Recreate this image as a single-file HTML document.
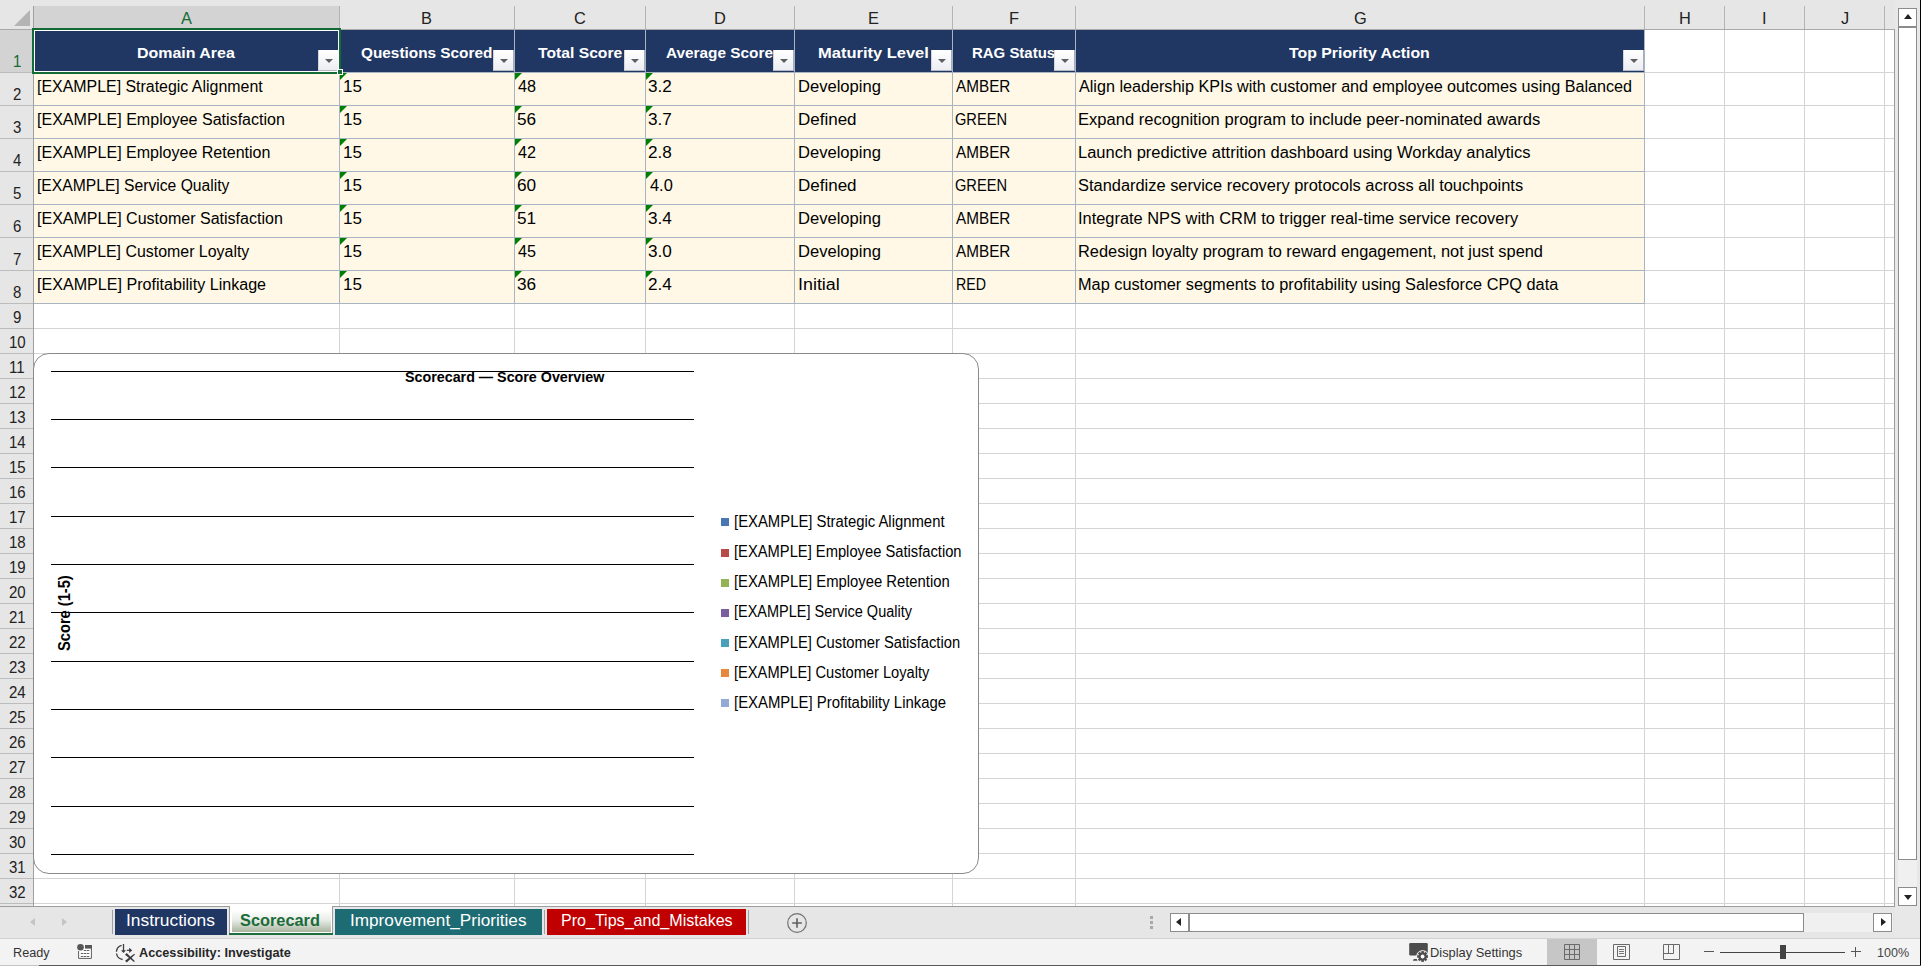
<!DOCTYPE html>
<html><head><meta charset="utf-8"><style>
html,body{margin:0;padding:0;}
body{width:1921px;height:966px;position:relative;overflow:hidden;background:#e6e6e6;font-family:'Liberation Sans',sans-serif;}
body>div,body>svg{position:absolute;}
.t{white-space:nowrap;transform-origin:0 0;}
</style></head><body>
<div style="left:0px;top:0px;width:1921px;height:966px;background:#e6e6e6"></div><div style="left:34px;top:30px;width:1860px;height:876px;background:#fff"></div><div style="left:34px;top:6px;width:305px;height:23px;background:#d3d3d3"></div><div style="left:0px;top:30px;width:33px;height:42px;background:#d3d3d3"></div><div style="left:339px;top:6px;width:1px;height:23px;background:#b4b4b4"></div><div style="left:514px;top:6px;width:1px;height:23px;background:#b4b4b4"></div><div style="left:645px;top:6px;width:1px;height:23px;background:#b4b4b4"></div><div style="left:794px;top:6px;width:1px;height:23px;background:#b4b4b4"></div><div style="left:952px;top:6px;width:1px;height:23px;background:#b4b4b4"></div><div style="left:1075px;top:6px;width:1px;height:23px;background:#b4b4b4"></div><div style="left:1644px;top:6px;width:1px;height:23px;background:#b4b4b4"></div><div style="left:1724px;top:6px;width:1px;height:23px;background:#b4b4b4"></div><div style="left:1804px;top:6px;width:1px;height:23px;background:#b4b4b4"></div><div style="left:1884px;top:6px;width:1px;height:23px;background:#b4b4b4"></div><div style="left:0px;top:29px;width:1895px;height:1px;background:#a9a9a9"></div><div style="left:33px;top:6px;width:1px;height:901px;background:#a0a0a0"></div><div style="left:0px;top:72px;width:33px;height:1px;background:#bcbcbc"></div><div style="left:0px;top:105px;width:33px;height:1px;background:#bcbcbc"></div><div style="left:0px;top:138px;width:33px;height:1px;background:#bcbcbc"></div><div style="left:0px;top:171px;width:33px;height:1px;background:#bcbcbc"></div><div style="left:0px;top:204px;width:33px;height:1px;background:#bcbcbc"></div><div style="left:0px;top:237px;width:33px;height:1px;background:#bcbcbc"></div><div style="left:0px;top:270px;width:33px;height:1px;background:#bcbcbc"></div><div style="left:0px;top:303px;width:33px;height:1px;background:#bcbcbc"></div><div style="left:0px;top:328px;width:33px;height:1px;background:#bcbcbc"></div><div style="left:0px;top:353px;width:33px;height:1px;background:#bcbcbc"></div><div style="left:0px;top:378px;width:33px;height:1px;background:#bcbcbc"></div><div style="left:0px;top:403px;width:33px;height:1px;background:#bcbcbc"></div><div style="left:0px;top:428px;width:33px;height:1px;background:#bcbcbc"></div><div style="left:0px;top:453px;width:33px;height:1px;background:#bcbcbc"></div><div style="left:0px;top:478px;width:33px;height:1px;background:#bcbcbc"></div><div style="left:0px;top:503px;width:33px;height:1px;background:#bcbcbc"></div><div style="left:0px;top:528px;width:33px;height:1px;background:#bcbcbc"></div><div style="left:0px;top:553px;width:33px;height:1px;background:#bcbcbc"></div><div style="left:0px;top:578px;width:33px;height:1px;background:#bcbcbc"></div><div style="left:0px;top:603px;width:33px;height:1px;background:#bcbcbc"></div><div style="left:0px;top:628px;width:33px;height:1px;background:#bcbcbc"></div><div style="left:0px;top:653px;width:33px;height:1px;background:#bcbcbc"></div><div style="left:0px;top:678px;width:33px;height:1px;background:#bcbcbc"></div><div style="left:0px;top:703px;width:33px;height:1px;background:#bcbcbc"></div><div style="left:0px;top:728px;width:33px;height:1px;background:#bcbcbc"></div><div style="left:0px;top:753px;width:33px;height:1px;background:#bcbcbc"></div><div style="left:0px;top:778px;width:33px;height:1px;background:#bcbcbc"></div><div style="left:0px;top:803px;width:33px;height:1px;background:#bcbcbc"></div><div style="left:0px;top:828px;width:33px;height:1px;background:#bcbcbc"></div><div style="left:0px;top:853px;width:33px;height:1px;background:#bcbcbc"></div><div style="left:0px;top:878px;width:33px;height:1px;background:#bcbcbc"></div><div style="left:0px;top:903px;width:33px;height:1px;background:#bcbcbc"></div><div style="left:34px;top:72px;width:1860px;height:1px;background:#d4d4d4"></div><div style="left:34px;top:105px;width:1860px;height:1px;background:#d4d4d4"></div><div style="left:34px;top:138px;width:1860px;height:1px;background:#d4d4d4"></div><div style="left:34px;top:171px;width:1860px;height:1px;background:#d4d4d4"></div><div style="left:34px;top:204px;width:1860px;height:1px;background:#d4d4d4"></div><div style="left:34px;top:237px;width:1860px;height:1px;background:#d4d4d4"></div><div style="left:34px;top:270px;width:1860px;height:1px;background:#d4d4d4"></div><div style="left:34px;top:303px;width:1860px;height:1px;background:#d4d4d4"></div><div style="left:34px;top:328px;width:1860px;height:1px;background:#d4d4d4"></div><div style="left:34px;top:353px;width:1860px;height:1px;background:#d4d4d4"></div><div style="left:34px;top:378px;width:1860px;height:1px;background:#d4d4d4"></div><div style="left:34px;top:403px;width:1860px;height:1px;background:#d4d4d4"></div><div style="left:34px;top:428px;width:1860px;height:1px;background:#d4d4d4"></div><div style="left:34px;top:453px;width:1860px;height:1px;background:#d4d4d4"></div><div style="left:34px;top:478px;width:1860px;height:1px;background:#d4d4d4"></div><div style="left:34px;top:503px;width:1860px;height:1px;background:#d4d4d4"></div><div style="left:34px;top:528px;width:1860px;height:1px;background:#d4d4d4"></div><div style="left:34px;top:553px;width:1860px;height:1px;background:#d4d4d4"></div><div style="left:34px;top:578px;width:1860px;height:1px;background:#d4d4d4"></div><div style="left:34px;top:603px;width:1860px;height:1px;background:#d4d4d4"></div><div style="left:34px;top:628px;width:1860px;height:1px;background:#d4d4d4"></div><div style="left:34px;top:653px;width:1860px;height:1px;background:#d4d4d4"></div><div style="left:34px;top:678px;width:1860px;height:1px;background:#d4d4d4"></div><div style="left:34px;top:703px;width:1860px;height:1px;background:#d4d4d4"></div><div style="left:34px;top:728px;width:1860px;height:1px;background:#d4d4d4"></div><div style="left:34px;top:753px;width:1860px;height:1px;background:#d4d4d4"></div><div style="left:34px;top:778px;width:1860px;height:1px;background:#d4d4d4"></div><div style="left:34px;top:803px;width:1860px;height:1px;background:#d4d4d4"></div><div style="left:34px;top:828px;width:1860px;height:1px;background:#d4d4d4"></div><div style="left:34px;top:853px;width:1860px;height:1px;background:#d4d4d4"></div><div style="left:34px;top:878px;width:1860px;height:1px;background:#d4d4d4"></div><div style="left:34px;top:903px;width:1860px;height:1px;background:#d4d4d4"></div><div style="left:339px;top:30px;width:1px;height:876px;background:#d4d4d4"></div><div style="left:514px;top:30px;width:1px;height:876px;background:#d4d4d4"></div><div style="left:645px;top:30px;width:1px;height:876px;background:#d4d4d4"></div><div style="left:794px;top:30px;width:1px;height:876px;background:#d4d4d4"></div><div style="left:952px;top:30px;width:1px;height:876px;background:#d4d4d4"></div><div style="left:1075px;top:30px;width:1px;height:876px;background:#d4d4d4"></div><div style="left:1644px;top:30px;width:1px;height:876px;background:#d4d4d4"></div><div style="left:1724px;top:30px;width:1px;height:876px;background:#d4d4d4"></div><div style="left:1804px;top:30px;width:1px;height:876px;background:#d4d4d4"></div><div style="left:1884px;top:30px;width:1px;height:876px;background:#d4d4d4"></div><div style="left:1894px;top:29px;width:1px;height:878px;background:#9c9c9c"></div><div style="left:0px;top:906px;width:1895px;height:1px;background:#9c9c9c"></div><div style="left:34px;top:30px;width:1610px;height:42px;background:#203764"></div><div style="left:34px;top:73px;width:1610px;height:230px;background:#fff8e6"></div><div style="left:34px;top:105px;width:1611px;height:1px;background:#aab3c1"></div><div style="left:34px;top:138px;width:1611px;height:1px;background:#aab3c1"></div><div style="left:34px;top:171px;width:1611px;height:1px;background:#aab3c1"></div><div style="left:34px;top:204px;width:1611px;height:1px;background:#aab3c1"></div><div style="left:34px;top:237px;width:1611px;height:1px;background:#aab3c1"></div><div style="left:34px;top:270px;width:1611px;height:1px;background:#aab3c1"></div><div style="left:34px;top:303px;width:1611px;height:1px;background:#aab3c1"></div><div style="left:34px;top:72px;width:1611px;height:1px;background:#aab3c1"></div><div style="left:339px;top:30px;width:1px;height:274px;background:#aab3c1"></div><div style="left:514px;top:30px;width:1px;height:274px;background:#aab3c1"></div><div style="left:645px;top:30px;width:1px;height:274px;background:#aab3c1"></div><div style="left:794px;top:30px;width:1px;height:274px;background:#aab3c1"></div><div style="left:952px;top:30px;width:1px;height:274px;background:#aab3c1"></div><div style="left:1075px;top:30px;width:1px;height:274px;background:#aab3c1"></div><div style="left:1644px;top:30px;width:1px;height:274px;background:#aab3c1"></div><div style="left:318px;top:50px;width:21px;height:21px;background:linear-gradient(#ffffff,#eceef3);border-left:1px solid #d2d5da;border-bottom:1px solid #b4b8c0;border-right:1px solid #a6adb8;box-sizing:border-box"></div><div style="left:324.5px;top:59px;width:0;height:0;border-left:4px solid transparent;border-right:4px solid transparent;border-top:4px solid #5f5f5f"></div><div style="left:493px;top:50px;width:21px;height:21px;background:linear-gradient(#ffffff,#eceef3);border-left:1px solid #d2d5da;border-bottom:1px solid #b4b8c0;border-right:1px solid #a6adb8;box-sizing:border-box"></div><div style="left:499.5px;top:59px;width:0;height:0;border-left:4px solid transparent;border-right:4px solid transparent;border-top:4px solid #5f5f5f"></div><div style="left:624px;top:50px;width:21px;height:21px;background:linear-gradient(#ffffff,#eceef3);border-left:1px solid #d2d5da;border-bottom:1px solid #b4b8c0;border-right:1px solid #a6adb8;box-sizing:border-box"></div><div style="left:630.5px;top:59px;width:0;height:0;border-left:4px solid transparent;border-right:4px solid transparent;border-top:4px solid #5f5f5f"></div><div style="left:773px;top:50px;width:21px;height:21px;background:linear-gradient(#ffffff,#eceef3);border-left:1px solid #d2d5da;border-bottom:1px solid #b4b8c0;border-right:1px solid #a6adb8;box-sizing:border-box"></div><div style="left:779.5px;top:59px;width:0;height:0;border-left:4px solid transparent;border-right:4px solid transparent;border-top:4px solid #5f5f5f"></div><div style="left:931px;top:50px;width:21px;height:21px;background:linear-gradient(#ffffff,#eceef3);border-left:1px solid #d2d5da;border-bottom:1px solid #b4b8c0;border-right:1px solid #a6adb8;box-sizing:border-box"></div><div style="left:937.5px;top:59px;width:0;height:0;border-left:4px solid transparent;border-right:4px solid transparent;border-top:4px solid #5f5f5f"></div><div style="left:1054px;top:50px;width:21px;height:21px;background:linear-gradient(#ffffff,#eceef3);border-left:1px solid #d2d5da;border-bottom:1px solid #b4b8c0;border-right:1px solid #a6adb8;box-sizing:border-box"></div><div style="left:1060.5px;top:59px;width:0;height:0;border-left:4px solid transparent;border-right:4px solid transparent;border-top:4px solid #5f5f5f"></div><div style="left:1623px;top:50px;width:21px;height:21px;background:linear-gradient(#ffffff,#eceef3);border-left:1px solid #d2d5da;border-bottom:1px solid #b4b8c0;border-right:1px solid #a6adb8;box-sizing:border-box"></div><div style="left:1629.5px;top:59px;width:0;height:0;border-left:4px solid transparent;border-right:4px solid transparent;border-top:4px solid #5f5f5f"></div><div style="left:340px;top:73px;width:0;height:0;border-top:7px solid #008000;border-right:7px solid transparent"></div><div style="left:515px;top:73px;width:0;height:0;border-top:7px solid #008000;border-right:7px solid transparent"></div><div style="left:646px;top:73px;width:0;height:0;border-top:7px solid #008000;border-right:7px solid transparent"></div><div style="left:340px;top:106px;width:0;height:0;border-top:7px solid #008000;border-right:7px solid transparent"></div><div style="left:515px;top:106px;width:0;height:0;border-top:7px solid #008000;border-right:7px solid transparent"></div><div style="left:646px;top:106px;width:0;height:0;border-top:7px solid #008000;border-right:7px solid transparent"></div><div style="left:340px;top:139px;width:0;height:0;border-top:7px solid #008000;border-right:7px solid transparent"></div><div style="left:515px;top:139px;width:0;height:0;border-top:7px solid #008000;border-right:7px solid transparent"></div><div style="left:646px;top:139px;width:0;height:0;border-top:7px solid #008000;border-right:7px solid transparent"></div><div style="left:340px;top:172px;width:0;height:0;border-top:7px solid #008000;border-right:7px solid transparent"></div><div style="left:515px;top:172px;width:0;height:0;border-top:7px solid #008000;border-right:7px solid transparent"></div><div style="left:646px;top:172px;width:0;height:0;border-top:7px solid #008000;border-right:7px solid transparent"></div><div style="left:340px;top:205px;width:0;height:0;border-top:7px solid #008000;border-right:7px solid transparent"></div><div style="left:515px;top:205px;width:0;height:0;border-top:7px solid #008000;border-right:7px solid transparent"></div><div style="left:646px;top:205px;width:0;height:0;border-top:7px solid #008000;border-right:7px solid transparent"></div><div style="left:340px;top:238px;width:0;height:0;border-top:7px solid #008000;border-right:7px solid transparent"></div><div style="left:515px;top:238px;width:0;height:0;border-top:7px solid #008000;border-right:7px solid transparent"></div><div style="left:646px;top:238px;width:0;height:0;border-top:7px solid #008000;border-right:7px solid transparent"></div><div style="left:340px;top:271px;width:0;height:0;border-top:7px solid #008000;border-right:7px solid transparent"></div><div style="left:515px;top:271px;width:0;height:0;border-top:7px solid #008000;border-right:7px solid transparent"></div><div style="left:646px;top:271px;width:0;height:0;border-top:7px solid #008000;border-right:7px solid transparent"></div><div style="left:32px;top:28px;width:309px;height:46px;border:2px solid #136b36;box-sizing:border-box"></div><div style="left:34px;top:30px;width:305px;height:42px;border:1px solid #fff;box-sizing:border-box"></div><div style="left:337px;top:69px;width:6px;height:6px;background:#136b36;border:1px solid #fff;box-sizing:border-box"></div><div style="left:34px;top:28px;width:305px;height:1px;background:#136b36"></div><div style="left:14px;top:10px;width:0;height:0;border-bottom:16px solid #b4b4b4;border-left:16px solid transparent"></div><div style="left:33px;top:353px;width:946px;height:521px;background:#fff;border:1px solid #8a8a8a;border-radius:16px;box-sizing:border-box"></div><div style="left:51px;top:371px;width:643px;height:1px;background:#000"></div><div style="left:51px;top:419px;width:643px;height:1px;background:#000"></div><div style="left:51px;top:467px;width:643px;height:1px;background:#000"></div><div style="left:51px;top:516px;width:643px;height:1px;background:#000"></div><div style="left:51px;top:564px;width:643px;height:1px;background:#000"></div><div style="left:51px;top:612px;width:643px;height:1px;background:#000"></div><div style="left:51px;top:661px;width:643px;height:1px;background:#000"></div><div style="left:51px;top:709px;width:643px;height:1px;background:#000"></div><div style="left:51px;top:757px;width:643px;height:1px;background:#000"></div><div style="left:51px;top:806px;width:643px;height:1px;background:#000"></div><div style="left:51px;top:854px;width:643px;height:1px;background:#000"></div><div style="left:721px;top:518px;width:8px;height:8px;background:#4a76b2"></div><div style="left:721px;top:549px;width:8px;height:8px;background:#b84a45"></div><div style="left:721px;top:579px;width:8px;height:8px;background:#93b356"></div><div style="left:721px;top:609px;width:8px;height:8px;background:#7b5e9e"></div><div style="left:721px;top:639px;width:8px;height:8px;background:#4aa0b8"></div><div style="left:721px;top:669px;width:8px;height:8px;background:#e8883f"></div><div style="left:721px;top:699px;width:8px;height:8px;background:#93aad4"></div><div style="left:112px;top:910px;width:1px;height:24px;background:#a0a0a0"></div><div style="left:115px;top:909px;width:112px;height:26px;background:#203764"></div><div style="left:229px;top:906px;width:104px;height:29px;background:#fff;border-left:1px solid #9c9c9c;border-right:1px solid #9c9c9c;box-sizing:border-box"></div><div style="left:232px;top:910px;width:99px;height:22px;background:linear-gradient(#ffffff 0%,#e9ede7 45%,#a9b59f 100%)"></div><div style="left:229px;top:933px;width:104px;height:2px;background:#1c6e3c"></div><div style="left:335px;top:909px;width:207px;height:26px;background:#1d6b73"></div><div style="left:544px;top:910px;width:1px;height:24px;background:#a0a0a0"></div><div style="left:547px;top:909px;width:199px;height:26px;background:#c00000"></div><div style="left:748px;top:910px;width:1px;height:24px;background:#a0a0a0"></div><div style="left:30px;top:918px;width:0;height:0;border-top:4.5px solid transparent;border-bottom:4.5px solid transparent;border-right:5px solid #c4c4c4"></div><div style="left:62px;top:918px;width:0;height:0;border-top:4.5px solid transparent;border-bottom:4.5px solid transparent;border-left:5px solid #c4c4c4"></div><svg style="left:786px;top:912px" width="22" height="22" viewBox="0 0 22 22"><circle cx="11" cy="11" r="9.3" fill="none" stroke="#707070" stroke-width="1.2"/><path d="M11 6.2V15.8M6.2 11H15.8" stroke="#606060" stroke-width="1.6"/></svg><div style="left:1150px;top:916px;width:3px;height:3px;background:#a8a8a8"></div><div style="left:1150px;top:921px;width:3px;height:3px;background:#a8a8a8"></div><div style="left:1150px;top:926px;width:3px;height:3px;background:#a8a8a8"></div><div style="left:1170px;top:913px;width:723px;height:19px;background:#f0f0f0"></div><div style="left:1170px;top:913px;width:19px;height:19px;background:#fff;border:1px solid #8c8c8c;box-sizing:border-box"></div><div style="left:1188px;top:913px;width:616px;height:19px;background:#fff;border:1px solid #8c8c8c;border-left-width:2px;box-sizing:border-box"></div><div style="left:1873px;top:913px;width:19px;height:19px;background:#fff;border:1px solid #8c8c8c;box-sizing:border-box"></div><div style="left:1176px;top:918px;width:0;height:0;border-top:4.5px solid transparent;border-bottom:4.5px solid transparent;border-right:5px solid #222"></div><div style="left:1881px;top:918px;width:0;height:0;border-top:4.5px solid transparent;border-bottom:4.5px solid transparent;border-left:5px solid #222"></div><div style="left:1895px;top:0px;width:25px;height:938px;background:#e8e8e8"></div><div style="left:1898px;top:8px;width:19px;height:880px;background:#f0f0f0"></div><div style="left:1898px;top:8px;width:19px;height:19px;background:#fff;border:1px solid #8c8c8c;box-sizing:border-box"></div><div style="left:1898px;top:26px;width:19px;height:834px;background:#fff;border:1px solid #8c8c8c;border-top-width:2px;box-sizing:border-box"></div><div style="left:1898px;top:887px;width:19px;height:19px;background:#fff;border:1px solid #8c8c8c;box-sizing:border-box"></div><div style="left:1903.5px;top:14px;width:0;height:0;border-left:4.5px solid transparent;border-right:4.5px solid transparent;border-bottom:5px solid #222"></div><div style="left:1903.5px;top:895px;width:0;height:0;border-left:4.5px solid transparent;border-right:4.5px solid transparent;border-top:5px solid #222"></div><div style="left:1920px;top:0px;width:1px;height:966px;background:#000"></div><div style="left:0px;top:938px;width:1920px;height:27px;background:#f3f3f3"></div><div style="left:0px;top:938px;width:1920px;height:1px;background:#d2d2d2"></div><div style="left:0px;top:965px;width:39px;height:1px;background:#c4c4c4"></div><div style="left:39px;top:965px;width:1882px;height:1px;background:#5a5a5a"></div><div style="left:1547px;top:939px;width:50px;height:26px;background:#c6c6c6"></div><svg style="left:74px;top:940px" width="22" height="22" viewBox="0 0 22 22"><path d="M4.6 11V18.4H17.4V5" fill="#fff" stroke="#555" stroke-width="0.95"/><rect x="11" y="5" width="6.9" height="3.6" fill="#555"/><circle cx="6.5" cy="7.3" r="4" fill="#f3f3f3"/><circle cx="6.5" cy="7.3" r="3.3" fill="#555"/><path d="M10.2 10.5h1.7M13.2 10.5h1.7M7.2 13.5h1.7M10.2 13.5h1.7M13.2 13.5h1.7M7.2 16.5h1.7M10.2 16.5h1.7M13.2 16.5h1.7" stroke="#555" stroke-width="0.9" stroke-linecap="round"/></svg><svg style="left:112px;top:940px" width="26" height="24" viewBox="0 0 26 24"><path d="M9.6 5.3A7.2 7.2 0 0 0 4.4 11.7M4.5 13.5A7.2 7.2 0 0 0 10.6 19.5" fill="none" stroke="#3c3c3c" stroke-width="1.35"/><path d="M11.5 4V11" stroke="#3c3c3c" stroke-width="1.3"/><path d="M9 10.2H14L11.5 12.9Z" fill="#3c3c3c"/><path d="M14.8 10.3H18" stroke="#3c3c3c" stroke-width="1.2"/><path d="M17.2 7.7V12.9L20.2 10.3Z" fill="#3c3c3c"/><path d="M13 14.8L14.8 13L22.9 21.2L22 22.1Z" fill="#3c3c3c"/><path d="M13.1 20.8L14.8 22.4L23 14.6L22.2 13.8Z" fill="#3c3c3c"/></svg><svg style="left:1405px;top:940px" width="26" height="24" viewBox="0 0 26 24"><rect x="4.2" y="3" width="18.6" height="12.6" rx="1.3" fill="#4d4d4d"/><path d="M8.8 19H12.7V20.8H7.8Z" fill="#4d4d4d"/><g transform="translate(17.6,16.5)"><g fill="#f3f3f3"><circle r="4.9"/><rect x="-2.1" y="-6.2" width="4.2" height="4" transform="rotate(0)"/><rect x="-2.1" y="-6.2" width="4.2" height="4" transform="rotate(45)"/><rect x="-2.1" y="-6.2" width="4.2" height="4" transform="rotate(90)"/><rect x="-2.1" y="-6.2" width="4.2" height="4" transform="rotate(135)"/><rect x="-2.1" y="-6.2" width="4.2" height="4" transform="rotate(180)"/><rect x="-2.1" y="-6.2" width="4.2" height="4" transform="rotate(225)"/><rect x="-2.1" y="-6.2" width="4.2" height="4" transform="rotate(270)"/><rect x="-2.1" y="-6.2" width="4.2" height="4" transform="rotate(315)"/></g><g fill="#4d4d4d"><circle r="3.9"/><rect x="-1.3" y="-5.4" width="2.6" height="3" transform="rotate(0)"/><rect x="-1.3" y="-5.4" width="2.6" height="3" transform="rotate(45)"/><rect x="-1.3" y="-5.4" width="2.6" height="3" transform="rotate(90)"/><rect x="-1.3" y="-5.4" width="2.6" height="3" transform="rotate(135)"/><rect x="-1.3" y="-5.4" width="2.6" height="3" transform="rotate(180)"/><rect x="-1.3" y="-5.4" width="2.6" height="3" transform="rotate(225)"/><rect x="-1.3" y="-5.4" width="2.6" height="3" transform="rotate(270)"/><rect x="-1.3" y="-5.4" width="2.6" height="3" transform="rotate(315)"/></g><circle r="1.9" fill="#fff"/></g></svg><svg style="left:1564px;top:944px" width="17" height="17" viewBox="0 0 17 17"><path d="M0.5 0.5h15v15h-15zM5.5 0.5v15M10.5 0.5v15M0.5 5.5h15M0.5 10.5h15" fill="none" stroke="#6a6a6a" stroke-width="1"/></svg><svg style="left:1613px;top:944px" width="18" height="17" viewBox="0 0 18 17"><path d="M0.5 0.5h16v15h-16zM4.5 2.5h8v10h-8z" fill="none" stroke="#6a6a6a" stroke-width="1"/><path d="M6 5.5h5M6 7.5h5M6 9.5h5" stroke="#6a6a6a" stroke-width="0.9"/></svg><svg style="left:1663px;top:944px" width="18" height="17" viewBox="0 0 18 17"><path d="M0.5 0.5h16v15h-16zM0.5 9.5h10V0.5M5.5 0.5v9" fill="none" stroke="#6a6a6a" stroke-width="1"/></svg><div style="left:1704px;top:951px;width:10px;height:1px;background:#555"></div><div style="left:1720px;top:952px;width:125px;height:1px;background:#444"></div><div style="left:1780px;top:945px;width:6px;height:14px;background:#444"></div><div style="left:1851px;top:951px;width:10px;height:1px;background:#555"></div><div style="left:1855px;top:947px;width:1px;height:10px;background:#555"></div>
<div class="t" style="left:180.87px;top:11.00px;font-size:16px;line-height:16px;font-weight:400;color:#136b36;transform:scaleX(1.0238)">A</div><div class="t" style="left:421.37px;top:11.00px;font-size:16px;line-height:16px;font-weight:400;color:#222;transform:scaleX(1.0238)">B</div><div class="t" style="left:573.86px;top:11.00px;font-size:16px;line-height:16px;font-weight:400;color:#222;transform:scaleX(1.0238)">C</div><div class="t" style="left:713.86px;top:11.00px;font-size:16px;line-height:16px;font-weight:400;color:#222;transform:scaleX(1.0238)">D</div><div class="t" style="left:867.87px;top:11.00px;font-size:16px;line-height:16px;font-weight:400;color:#222;transform:scaleX(1.0238)">E</div><div class="t" style="left:1008.88px;top:11.00px;font-size:16px;line-height:16px;font-weight:400;color:#222;transform:scaleX(1.0238)">F</div><div class="t" style="left:1353.86px;top:11.00px;font-size:16px;line-height:16px;font-weight:400;color:#222;transform:scaleX(1.0238)">G</div><div class="t" style="left:1678.87px;top:11.00px;font-size:16px;line-height:16px;font-weight:400;color:#222;transform:scaleX(1.0238)">H</div><div class="t" style="left:1762.45px;top:11.00px;font-size:16px;line-height:16px;font-weight:400;color:#222;transform:scaleX(1.0238)">I</div><div class="t" style="left:1840.92px;top:11.00px;font-size:16px;line-height:16px;font-weight:400;color:#222;transform:scaleX(1.0238)">J</div><div class="t" style="left:12.85px;top:53.00px;font-size:16.5px;line-height:16.5px;font-weight:400;color:#136b36;transform:scaleX(0.9100)">1</div><div class="t" style="left:12.85px;top:86.00px;font-size:16.5px;line-height:16.5px;font-weight:400;color:#222;transform:scaleX(0.9100)">2</div><div class="t" style="left:12.85px;top:119.00px;font-size:16.5px;line-height:16.5px;font-weight:400;color:#222;transform:scaleX(0.9100)">3</div><div class="t" style="left:13.30px;top:152.00px;font-size:16.5px;line-height:16.5px;font-weight:400;color:#222;transform:scaleX(0.9100)">4</div><div class="t" style="left:12.85px;top:185.00px;font-size:16.5px;line-height:16.5px;font-weight:400;color:#222;transform:scaleX(0.9100)">5</div><div class="t" style="left:12.85px;top:218.00px;font-size:16.5px;line-height:16.5px;font-weight:400;color:#222;transform:scaleX(0.9100)">6</div><div class="t" style="left:12.85px;top:251.00px;font-size:16.5px;line-height:16.5px;font-weight:400;color:#222;transform:scaleX(0.9100)">7</div><div class="t" style="left:12.85px;top:284.00px;font-size:16.5px;line-height:16.5px;font-weight:400;color:#222;transform:scaleX(0.9100)">8</div><div class="t" style="left:12.85px;top:309.00px;font-size:16.5px;line-height:16.5px;font-weight:400;color:#222;transform:scaleX(0.9100)">9</div><div class="t" style="left:8.75px;top:334.00px;font-size:16.5px;line-height:16.5px;font-weight:400;color:#222;transform:scaleX(0.9100)">10</div><div class="t" style="left:9.21px;top:359.00px;font-size:16.5px;line-height:16.5px;font-weight:400;color:#222;transform:scaleX(0.9100)">11</div><div class="t" style="left:8.75px;top:384.00px;font-size:16.5px;line-height:16.5px;font-weight:400;color:#222;transform:scaleX(0.9100)">12</div><div class="t" style="left:8.75px;top:409.00px;font-size:16.5px;line-height:16.5px;font-weight:400;color:#222;transform:scaleX(0.9100)">13</div><div class="t" style="left:8.75px;top:434.00px;font-size:16.5px;line-height:16.5px;font-weight:400;color:#222;transform:scaleX(0.9100)">14</div><div class="t" style="left:8.75px;top:459.00px;font-size:16.5px;line-height:16.5px;font-weight:400;color:#222;transform:scaleX(0.9100)">15</div><div class="t" style="left:8.75px;top:484.00px;font-size:16.5px;line-height:16.5px;font-weight:400;color:#222;transform:scaleX(0.9100)">16</div><div class="t" style="left:8.75px;top:509.00px;font-size:16.5px;line-height:16.5px;font-weight:400;color:#222;transform:scaleX(0.9100)">17</div><div class="t" style="left:8.75px;top:534.00px;font-size:16.5px;line-height:16.5px;font-weight:400;color:#222;transform:scaleX(0.9100)">18</div><div class="t" style="left:8.75px;top:559.00px;font-size:16.5px;line-height:16.5px;font-weight:400;color:#222;transform:scaleX(0.9100)">19</div><div class="t" style="left:8.75px;top:584.00px;font-size:16.5px;line-height:16.5px;font-weight:400;color:#222;transform:scaleX(0.9100)">20</div><div class="t" style="left:8.75px;top:609.00px;font-size:16.5px;line-height:16.5px;font-weight:400;color:#222;transform:scaleX(0.9100)">21</div><div class="t" style="left:8.75px;top:634.00px;font-size:16.5px;line-height:16.5px;font-weight:400;color:#222;transform:scaleX(0.9100)">22</div><div class="t" style="left:8.75px;top:659.00px;font-size:16.5px;line-height:16.5px;font-weight:400;color:#222;transform:scaleX(0.9100)">23</div><div class="t" style="left:8.75px;top:684.00px;font-size:16.5px;line-height:16.5px;font-weight:400;color:#222;transform:scaleX(0.9100)">24</div><div class="t" style="left:8.75px;top:709.00px;font-size:16.5px;line-height:16.5px;font-weight:400;color:#222;transform:scaleX(0.9100)">25</div><div class="t" style="left:8.75px;top:734.00px;font-size:16.5px;line-height:16.5px;font-weight:400;color:#222;transform:scaleX(0.9100)">26</div><div class="t" style="left:8.75px;top:759.00px;font-size:16.5px;line-height:16.5px;font-weight:400;color:#222;transform:scaleX(0.9100)">27</div><div class="t" style="left:8.75px;top:784.00px;font-size:16.5px;line-height:16.5px;font-weight:400;color:#222;transform:scaleX(0.9100)">28</div><div class="t" style="left:8.75px;top:809.00px;font-size:16.5px;line-height:16.5px;font-weight:400;color:#222;transform:scaleX(0.9100)">29</div><div class="t" style="left:8.75px;top:834.00px;font-size:16.5px;line-height:16.5px;font-weight:400;color:#222;transform:scaleX(0.9100)">30</div><div class="t" style="left:8.75px;top:859.00px;font-size:16.5px;line-height:16.5px;font-weight:400;color:#222;transform:scaleX(0.9100)">31</div><div class="t" style="left:8.75px;top:884.00px;font-size:16.5px;line-height:16.5px;font-weight:400;color:#222;transform:scaleX(0.9100)">32</div><div class="t" style="left:136.57px;top:45.00px;font-size:15.5px;line-height:15.5px;font-weight:700;color:#fff;transform:scaleX(1.0287)">Domain Area</div><div class="t" style="left:360.51px;top:45.00px;font-size:15.5px;line-height:15.5px;font-weight:700;color:#fff;transform:scaleX(0.9901)">Questions Scored</div><div class="t" style="left:538.00px;top:45.00px;font-size:15.5px;line-height:15.5px;font-weight:700;color:#fff;transform:scaleX(1.0120)">Total Score</div><div class="t" style="left:666.00px;top:45.00px;font-size:15.5px;line-height:15.5px;font-weight:700;color:#fff;transform:scaleX(0.9907)">Average Score</div><div class="t" style="left:818.44px;top:45.00px;font-size:15.5px;line-height:15.5px;font-weight:700;color:#fff;transform:scaleX(1.0637)">Maturity Level</div><div class="t" style="left:971.54px;top:45.00px;font-size:15.5px;line-height:15.5px;font-weight:700;color:#fff;transform:scaleX(0.9647)">RAG Status</div><div class="t" style="left:1289.20px;top:45.00px;font-size:15.5px;line-height:15.5px;font-weight:700;color:#fff;transform:scaleX(1.0219)">Top Priority Action</div><div class="t" style="left:37.10px;top:79.00px;font-size:16px;line-height:16px;font-weight:400;color:#000;transform:scaleX(0.9951)">[EXAMPLE] Strategic Alignment</div><div class="t" style="left:342.94px;top:79.00px;font-size:16px;line-height:16px;font-weight:400;color:#000;transform:scaleX(1.0625)">15</div><div class="t" style="left:518.40px;top:79.00px;font-size:16px;line-height:16px;font-weight:400;color:#000;transform:scaleX(1.0118)">48</div><div class="t" style="left:648.43px;top:79.00px;font-size:16px;line-height:16px;font-weight:400;color:#000;transform:scaleX(1.0714)">3.2</div><div class="t" style="left:797.71px;top:79.00px;font-size:16px;line-height:16px;font-weight:400;color:#000;transform:scaleX(1.0353)">Developing</div><div class="t" style="left:956.00px;top:79.00px;font-size:16px;line-height:16px;font-weight:400;color:#000;transform:scaleX(0.9554)">AMBER</div><div class="t" style="left:1079.00px;top:79.00px;font-size:16px;line-height:16px;font-weight:400;color:#000;transform:scaleX(1.0095)">Align leadership KPIs with customer and employee outcomes using Balanced</div><div class="t" style="left:37.10px;top:112.00px;font-size:16px;line-height:16px;font-weight:400;color:#000;transform:scaleX(1.0027)">[EXAMPLE] Employee Satisfaction</div><div class="t" style="left:342.94px;top:112.00px;font-size:16px;line-height:16px;font-weight:400;color:#000;transform:scaleX(1.0625)">15</div><div class="t" style="left:517.32px;top:112.00px;font-size:16px;line-height:16px;font-weight:400;color:#000;transform:scaleX(1.0750)">56</div><div class="t" style="left:648.43px;top:112.00px;font-size:16px;line-height:16px;font-weight:400;color:#000;transform:scaleX(1.0714)">3.7</div><div class="t" style="left:797.69px;top:112.00px;font-size:16px;line-height:16px;font-weight:400;color:#000;transform:scaleX(1.0613)">Defined</div><div class="t" style="left:955.09px;top:112.00px;font-size:16px;line-height:16px;font-weight:400;color:#000;transform:scaleX(0.9136)">GREEN</div><div class="t" style="left:1077.96px;top:112.00px;font-size:16px;line-height:16px;font-weight:400;color:#000;transform:scaleX(1.0353)">Expand recognition program to include peer-nominated awards</div><div class="t" style="left:37.10px;top:145.00px;font-size:16px;line-height:16px;font-weight:400;color:#000;transform:scaleX(1.0017)">[EXAMPLE] Employee Retention</div><div class="t" style="left:342.94px;top:145.00px;font-size:16px;line-height:16px;font-weight:400;color:#000;transform:scaleX(1.0625)">15</div><div class="t" style="left:518.40px;top:145.00px;font-size:16px;line-height:16px;font-weight:400;color:#000;transform:scaleX(1.0118)">42</div><div class="t" style="left:648.43px;top:145.00px;font-size:16px;line-height:16px;font-weight:400;color:#000;transform:scaleX(1.0714)">2.8</div><div class="t" style="left:797.71px;top:145.00px;font-size:16px;line-height:16px;font-weight:400;color:#000;transform:scaleX(1.0353)">Developing</div><div class="t" style="left:956.00px;top:145.00px;font-size:16px;line-height:16px;font-weight:400;color:#000;transform:scaleX(0.9554)">AMBER</div><div class="t" style="left:1077.97px;top:145.00px;font-size:16px;line-height:16px;font-weight:400;color:#000;transform:scaleX(1.0306)">Launch predictive attrition dashboard using Workday analytics</div><div class="t" style="left:37.12px;top:178.00px;font-size:16px;line-height:16px;font-weight:400;color:#000;transform:scaleX(0.9791)">[EXAMPLE] Service Quality</div><div class="t" style="left:342.94px;top:178.00px;font-size:16px;line-height:16px;font-weight:400;color:#000;transform:scaleX(1.0625)">15</div><div class="t" style="left:517.32px;top:178.00px;font-size:16px;line-height:16px;font-weight:400;color:#000;transform:scaleX(1.0750)">60</div><div class="t" style="left:649.50px;top:178.00px;font-size:16px;line-height:16px;font-weight:400;color:#000;transform:scaleX(1.0227)">4.0</div><div class="t" style="left:797.69px;top:178.00px;font-size:16px;line-height:16px;font-weight:400;color:#000;transform:scaleX(1.0613)">Defined</div><div class="t" style="left:955.09px;top:178.00px;font-size:16px;line-height:16px;font-weight:400;color:#000;transform:scaleX(0.9136)">GREEN</div><div class="t" style="left:1077.97px;top:178.00px;font-size:16px;line-height:16px;font-weight:400;color:#000;transform:scaleX(1.0256)">Standardize service recovery protocols across all touchpoints</div><div class="t" style="left:37.10px;top:211.00px;font-size:16px;line-height:16px;font-weight:400;color:#000;transform:scaleX(1.0016)">[EXAMPLE] Customer Satisfaction</div><div class="t" style="left:342.94px;top:211.00px;font-size:16px;line-height:16px;font-weight:400;color:#000;transform:scaleX(1.0625)">15</div><div class="t" style="left:517.32px;top:211.00px;font-size:16px;line-height:16px;font-weight:400;color:#000;transform:scaleX(1.0750)">51</div><div class="t" style="left:648.43px;top:211.00px;font-size:16px;line-height:16px;font-weight:400;color:#000;transform:scaleX(1.0714)">3.4</div><div class="t" style="left:797.71px;top:211.00px;font-size:16px;line-height:16px;font-weight:400;color:#000;transform:scaleX(1.0353)">Developing</div><div class="t" style="left:956.00px;top:211.00px;font-size:16px;line-height:16px;font-weight:400;color:#000;transform:scaleX(0.9554)">AMBER</div><div class="t" style="left:1077.98px;top:211.00px;font-size:16px;line-height:16px;font-weight:400;color:#000;transform:scaleX(1.0247)">Integrate NPS with CRM to trigger real-time service recovery</div><div class="t" style="left:37.11px;top:244.00px;font-size:16px;line-height:16px;font-weight:400;color:#000;transform:scaleX(0.9948)">[EXAMPLE] Customer Loyalty</div><div class="t" style="left:342.94px;top:244.00px;font-size:16px;line-height:16px;font-weight:400;color:#000;transform:scaleX(1.0625)">15</div><div class="t" style="left:518.40px;top:244.00px;font-size:16px;line-height:16px;font-weight:400;color:#000;transform:scaleX(1.0118)">45</div><div class="t" style="left:648.43px;top:244.00px;font-size:16px;line-height:16px;font-weight:400;color:#000;transform:scaleX(1.0714)">3.0</div><div class="t" style="left:797.71px;top:244.00px;font-size:16px;line-height:16px;font-weight:400;color:#000;transform:scaleX(1.0353)">Developing</div><div class="t" style="left:956.00px;top:244.00px;font-size:16px;line-height:16px;font-weight:400;color:#000;transform:scaleX(0.9554)">AMBER</div><div class="t" style="left:1077.98px;top:244.00px;font-size:16px;line-height:16px;font-weight:400;color:#000;transform:scaleX(1.0230)">Redesign loyalty program to reward engagement, not just spend</div><div class="t" style="left:37.09px;top:277.00px;font-size:16px;line-height:16px;font-weight:400;color:#000;transform:scaleX(1.0062)">[EXAMPLE] Profitability Linkage</div><div class="t" style="left:342.94px;top:277.00px;font-size:16px;line-height:16px;font-weight:400;color:#000;transform:scaleX(1.0625)">15</div><div class="t" style="left:517.32px;top:277.00px;font-size:16px;line-height:16px;font-weight:400;color:#000;transform:scaleX(1.0750)">36</div><div class="t" style="left:648.43px;top:277.00px;font-size:16px;line-height:16px;font-weight:400;color:#000;transform:scaleX(1.0714)">2.4</div><div class="t" style="left:797.88px;top:277.00px;font-size:16px;line-height:16px;font-weight:400;color:#000;transform:scaleX(1.1171)">Initial</div><div class="t" style="left:955.81px;top:277.00px;font-size:16px;line-height:16px;font-weight:400;color:#000;transform:scaleX(0.8875)">RED</div><div class="t" style="left:1077.98px;top:277.00px;font-size:16px;line-height:16px;font-weight:400;color:#000;transform:scaleX(1.0189)">Map customer segments to profitability using Salesforce CPQ data</div><div class="t" style="left:404.98px;top:369.60px;font-size:14px;line-height:14px;font-weight:700;color:#000;transform:scaleX(1.0205)">Scorecard — Score Overview</div><div class="t" style="left:733.57px;top:514.00px;font-size:16px;line-height:16px;font-weight:400;color:#000;transform:scaleX(0.9283)">[EXAMPLE] Strategic Alignment</div><div class="t" style="left:733.58px;top:544.10px;font-size:16px;line-height:16px;font-weight:400;color:#000;transform:scaleX(0.9204)">[EXAMPLE] Employee Satisfaction</div><div class="t" style="left:733.57px;top:574.30px;font-size:16px;line-height:16px;font-weight:400;color:#000;transform:scaleX(0.9255)">[EXAMPLE] Employee Retention</div><div class="t" style="left:733.59px;top:604.40px;font-size:16px;line-height:16px;font-weight:400;color:#000;transform:scaleX(0.9056)">[EXAMPLE] Service Quality</div><div class="t" style="left:733.58px;top:634.50px;font-size:16px;line-height:16px;font-weight:400;color:#000;transform:scaleX(0.9213)">[EXAMPLE] Customer Satisfaction</div><div class="t" style="left:733.58px;top:664.60px;font-size:16px;line-height:16px;font-weight:400;color:#000;transform:scaleX(0.9155)">[EXAMPLE] Customer Loyalty</div><div class="t" style="left:733.57px;top:694.80px;font-size:16px;line-height:16px;font-weight:400;color:#000;transform:scaleX(0.9314)">[EXAMPLE] Profitability Linkage</div><div class="t" style="left:125.98px;top:911.70px;font-size:17px;line-height:17px;font-weight:400;color:#fff;transform:scaleX(1.0233)">Instructions</div><div class="t" style="left:240.44px;top:911.70px;font-size:17px;line-height:17px;font-weight:700;color:#1b6b3a;transform:scaleX(0.9605)">Scorecard</div><div class="t" style="left:349.99px;top:911.70px;font-size:17px;line-height:17px;font-weight:400;color:#fff;transform:scaleX(1.0098)">Improvement_Priorities</div><div class="t" style="left:560.66px;top:911.70px;font-size:17px;line-height:17px;font-weight:400;color:#fff;transform:scaleX(0.9444)">Pro_Tips_and_Mistakes</div><div class="t" style="left:13.49px;top:947.00px;font-size:12.5px;line-height:12.5px;font-weight:400;color:#333;transform:scaleX(1.0143)">Ready</div><div class="t" style="left:138.60px;top:945.80px;font-size:13px;line-height:13px;font-weight:700;color:#262626;transform:scaleX(0.9768)">Accessibility: Investigate</div><div class="t" style="left:1429.51px;top:946.20px;font-size:13px;line-height:13px;font-weight:400;color:#333;transform:scaleX(0.9891)">Display Settings</div><div class="t" style="left:1876.96px;top:946.60px;font-size:12px;line-height:12px;font-weight:400;color:#444;transform:scaleX(1.0448)">100%</div><div class="t" style="left:0;top:0;font-size:16px;line-height:16px;font-weight:700;color:#000;transform:translate(57.00px,650.91px) rotate(-90deg) scaleX(0.9136)">Score (1-5)</div>
</body></html>
